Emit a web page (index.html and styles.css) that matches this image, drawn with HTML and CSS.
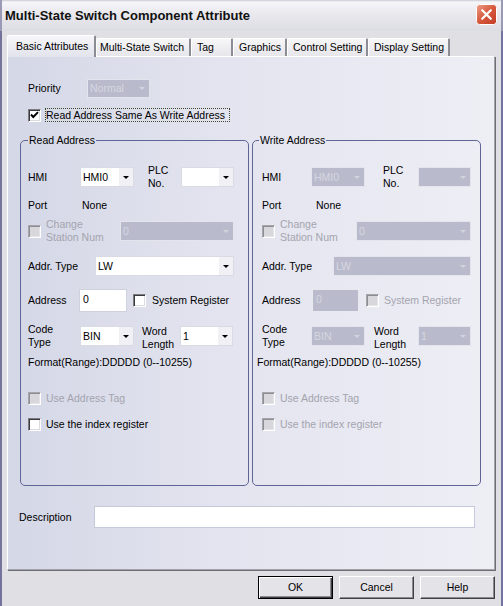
FILE: index.html
```html
<!DOCTYPE html>
<html>
<head>
<meta charset="utf-8">
<link rel="stylesheet" href="styles.css">
</head>
<body>
<div class="window">
  <div class="titlebar">
    <span class="title">Multi-State Switch Component Attribute</span>
    <span class="close">
      <svg width="21" height="21" viewBox="0 0 21 21">
        <defs>
          <linearGradient id="cg" x1="0" y1="0" x2="1" y2="1">
            <stop offset="0" stop-color="#ec9f88"/>
            <stop offset="0.5" stop-color="#d7583c"/>
            <stop offset="1" stop-color="#c03d26"/>
          </linearGradient>
        </defs>
        <rect x="0.5" y="0.5" width="20" height="20" rx="3" fill="url(#cg)" stroke="#ffffff"/>
        <path d="M6.2 6.2 L14.8 14.8 M14.8 6.2 L6.2 14.8" stroke="#ffffff" stroke-width="2.2" stroke-linecap="round"/>
      </svg>
    </span>
  </div>
  <div class="body">
    <div class="tabs">
      <div class="tab active t-basic">Basic Attributes</div>
      <div class="tab t-multi">Multi-State Switch</div>
      <div class="tab t-tag">Tag</div>
      <div class="tab t-gfx">Graphics</div>
      <div class="tab t-ctl">Control Setting</div>
      <div class="tab t-dsp">Display Setting</div>
    </div>
    <div class="panel">
      <div class="prio-row">
        <span class="prio-l">Priority</span>
        <div class="combo dis prio"><span class="v">Normal</span><span class="arr"></span></div>
      </div>
      <div class="same-row">
        <span class="chk on"><svg width="11" height="11" viewBox="0 0 11 11"><path d="M2 4.5 L4.3 7 L9 2.2" fill="none" stroke="#000" stroke-width="1.9"/></svg></span>
        <span class="focus">Read Address Same As Write Address</span>
      </div>
      <div class="groups">
        <fieldset class="group read">
          <legend>Read Address</legend>
          <div class="gbody">
            <div class="r r-hmi"><span class="l-c1">HMI</span><div class="combo c1"><span class="v">HMI0</span><span class="arr"></span></div><span class="l2 plc">PLC<br>No.</span><div class="combo c2"><span class="v"></span><span class="arr"></span></div></div>
            <div class="r r-port"><span class="l-port">Port</span><span>None</span></div>
            <div class="r r-chg"><span class="chk dis"></span><span class="l2 dtext chgl">Change<br>Station Num</span><div class="combo dis chgc"><span class="v">0</span><span class="arr"></span></div></div>
            <div class="r r-addr"><span class="l-addr">Addr. Type</span><div class="combo addrc"><span class="v">LW</span><span class="arr"></span></div></div>
            <div class="r r-adr"><span class="l-adr">Address</span><div class="inp adri">0</div><span class="chk sr"></span><span class="srl">System Register</span></div>
            <div class="r r-code"><span class="l2 l-code">Code<br>Type</span><div class="combo c1"><span class="v">BIN</span><span class="arr"></span></div><span class="l2 word">Word<br>Length</span><div class="combo c2"><span class="v">1</span><span class="arr"></span></div></div>
            <div class="r r-fmt"><span class="fmt">Format(Range):DDDDD (0--10255)</span></div>
            <div class="r r-tag"><span class="chk dis"></span><span class="cl dtext">Use Address Tag</span></div>
            <div class="r r-idx"><span class="chk"></span><span class="cl">Use the index register</span></div>
          </div>
        </fieldset>
        <fieldset class="group write">
          <legend>Write Address</legend>
          <div class="gbody">
            <div class="r r-hmi"><span class="l-c1">HMI</span><div class="combo dis c1"><span class="v">HMI0</span><span class="arr"></span></div><span class="l2 plc">PLC<br>No.</span><div class="combo dis c2"><span class="v"></span><span class="arr"></span></div></div>
            <div class="r r-port"><span class="l-port">Port</span><span>None</span></div>
            <div class="r r-chg"><span class="chk dis"></span><span class="l2 dtext chgl">Change<br>Station Num</span><div class="combo dis chgc"><span class="v">0</span><span class="arr"></span></div></div>
            <div class="r r-addr"><span class="l-addr">Addr. Type</span><div class="combo dis addrc"><span class="v">LW</span><span class="arr"></span></div></div>
            <div class="r r-adr"><span class="l-adr">Address</span><div class="inp dis adri">0</div><span class="chk dis sr"></span><span class="srl dtext">System Register</span></div>
            <div class="r r-code"><span class="l2 l-code">Code<br>Type</span><div class="combo dis c1"><span class="v">BIN</span><span class="arr"></span></div><span class="l2 word">Word<br>Length</span><div class="combo dis c2"><span class="v">1</span><span class="arr"></span></div></div>
            <div class="r r-fmt"><span class="fmt">Format(Range):DDDDD (0--10255)</span></div>
            <div class="r r-tag"><span class="chk dis"></span><span class="cl dtext">Use Address Tag</span></div>
            <div class="r r-idx"><span class="chk dis"></span><span class="cl dtext">Use the index register</span></div>
          </div>
        </fieldset>
      </div>
      <div class="desc-row">
        <span class="desc-l">Description</span>
        <div class="inp desc"></div>
      </div>
    </div>
    <div class="buttons">
      <div class="btn def">OK</div>
      <div class="btn">Cancel</div>
      <div class="btn">Help</div>
    </div>
  </div>
</div>
</body>
</html>
```
FILE: styles.css
```css
* { box-sizing: border-box; }
body {
  margin: 0;
  font-family: "Liberation Sans", Arial, sans-serif;
  font-size: 10.5px;
  line-height: 13px;
  color: #000;
  background: #e0dfe3;
}
.window {
  width: 503px;
  height: 606px;
  overflow: hidden;
  display: flex;
  flex-direction: column;
  background: #e0dfe3;
}
.titlebar {
  height: 31px;
  flex: none;
  display: flex;
  align-items: center;
  justify-content: space-between;
  padding: 0 4px 0 5px;
  background: linear-gradient(#c9c9d3 0, #f6f6f9 2px, #eaeaef 40%, #dcdce3 100%);
  border-left: 2px solid #9a9ab6;
  border-right: 2px solid #9a9ab6;
}
.titlebar .title {
  font-weight: bold;
  font-size: 13px;
  color: #111;
  margin-left: -2px;
}
.close { display: flex; width: 21px; height: 21px; margin-top: -2px; }
.body {
  flex: 1;
  border-left: 2px solid #73739c;
  border-right: 2px solid #73739c;
  padding: 4px 6px 0 5px;
  display: flex;
  flex-direction: column;
}
.tabs {
  display: flex;
  align-items: flex-end;
  height: 21px;
  flex: none;
}
.tab {
  height: 18px;
  padding: 2px 0 0 5px;
  background: linear-gradient(#f7f7f9, #e6e6eb);
  border-top: 1px solid #ffffff;
  border-left: 1px solid #ffffff;
  border-right: 2px solid #8c8c94;
  border-radius: 2px 2px 0 0;
  white-space: nowrap;
  overflow: hidden;
}
.tab.active {
  height: 22px;
  margin-bottom: -1px;
  padding: 4px 0 0 8px;
  position: relative;
  z-index: 1;
  background: linear-gradient(#f6f6f9, #e2e3ec);
}
.t-basic { width: 89px; }
.t-multi { width: 95px; padding-left: 3px; }
.t-tag { width: 42px; }
.t-gfx { width: 54px; }
.t-ctl { width: 81px; }
.t-dsp { width: 82px; }

.panel {
  width: 488px;
  height: 514px;
  flex: none;
  display: flex;
  flex-direction: column;
  border-top: 1px solid #ffffff;
  border-left: 1px solid #ffffff;
  border-right: 1px solid #a2a2a8;
  border-bottom: 1px solid #a2a2a8;
  box-shadow: 1px 1px 0 #6e6e74;
  background: linear-gradient(to right, #d4d7e6 0%, #e3e4ef 45%, #eeeef5 100%);
}
.prio-row {
  margin: 22px 0 0 20px;
  height: 19px;
  display: flex;
  align-items: center;
}
.prio-l { width: 59px; }
.combo.prio { width: 63px; height: 19px; }
.same-row {
  margin: 10px 0 0 20px;
  height: 14px;
  display: flex;
  align-items: center;
}
.focus {
  margin-left: 4px;
  border: 1px dotted #3c4a2a;
  height: 14px;
  line-height: 12px;
  padding: 0 0 0 0;
  width: 185px;
}
.groups {
  margin: 12px 0 0 12px;
  display: flex;
  gap: 3px;
  height: 352px;
  flex: none;
}
.group {
  margin: 0;
  width: 229px;
  height: 352px;
  min-width: 0;
  padding: 0 0 0 var(--pl);
  border: 1px solid #5f6596;
  border-radius: 5px;
}
.group legend {
  padding: 0 1px;
  height: 13px;
  line-height: 13px;
  margin-left: var(--lg);
}
.read {
  --pl: 7px; --lg: 0px;
  --c1: 52px; --c1w: 54px; --plcm: 14px; --plcw: 33px; --c2w: 53px;
  --chgw: 74px; --chgcw: 114px; --addrw: 67px; --addrcw: 139px;
  --adrw: 51px; --inpw: 48px; --srm: 6px; --srlm: 6px;
  --codew: 52px; --wordm: 8px; --wordw: 38px; --fmtm: 0px;
}
.write {
  --pl: 9px; --lg: -3px;
  --c1: 49px; --c1w: 54px; --plcm: 18px; --plcw: 35px; --c2w: 53px;
  --chgw: 76px; --chgcw: 115px; --addrw: 71px; --addrcw: 138px;
  --adrw: 50px; --inpw: 47px; --srm: 7px; --srlm: 5px;
  --codew: 49px; --wordm: 9px; --wordw: 44px; --fmtm: -5px;
}
.gbody { display: flex; flex-direction: column; }
.r { display: flex; align-items: center; white-space: nowrap; }
.r-hmi { margin-top: 16px; height: 28px; }
.r-port { margin-top: 7px; height: 14px; }
.r-chg { margin-top: 6px; height: 26px; }
.r-addr { margin-top: 12px; height: 20px; }
.r-adr { margin-top: 13px; height: 23px; }
.r-code { margin-top: 11px; height: 26px; }
.r-fmt { margin-top: 7px; height: 13px; }
.r-tag { margin-top: 22px; height: 14px; }
.r-idx { margin-top: 12px; height: 14px; }

.l-c1 { width: var(--c1); }
.c1 { width: var(--c1w); }
.plc { margin-left: var(--plcm); width: var(--plcw); }
.c2 { width: var(--c2w); }
.l-port { width: 54px; }
.chgl { margin-left: 5px; width: var(--chgw); }
.chgc { width: var(--chgcw); }
.l-addr { width: var(--addrw); }
.addrc { width: var(--addrcw); }
.l-adr { width: var(--adrw); }
.adri { width: var(--inpw); }
.sr { margin-left: var(--srm); }
.srl { margin-left: var(--srlm); }
.l-code { width: var(--codew); }
.word { margin-left: var(--wordm); width: var(--wordw); margin-top: 4px; }
.fmt { margin-left: var(--fmtm); }
.cl { margin-left: 5px; }
.l2 { line-height: 13px; }
.dtext { color: #a4a4ae; }

.combo {
  display: flex;
  align-items: center;
  height: 20px;
  flex: none;
  background: #ffffff;
  border: 1px solid #d8dae4;
  padding-left: 2px;
}
.combo .v { flex: 1; overflow: hidden; }
.combo .arr {
  width: 14px;
  align-self: stretch;
  display: flex;
  align-items: center;
  justify-content: center;
  background: #f1f1f5;
}
.combo .arr::after {
  content: "";
  border-left: 3px solid transparent;
  border-right: 3px solid transparent;
  border-top: 3px solid #000;
}
.combo.dis {
  background: #b9bbcc;
  border-color: #e4e5ec;
  color: #d6d7e0;
}
.combo.dis .arr { background: transparent; }
.combo.dis .arr::after { border-top-color: #d2d3dd; }

.inp {
  height: 23px;
  flex: none;
  display: flex;
  align-items: center;
  background: #ffffff;
  border: 1px solid #cfd2de;
  padding: 0 0 2px 3px;
}
.inp.dis {
  background: #b9bbcc;
  border: 1px solid #e8e9ef;
  color: #d6d7e0;
}
.desc-row {
  margin: 20px 0 0 11px;
  height: 22px;
  display: flex;
  align-items: center;
}
.desc-l { width: 75px; }
.inp.desc { width: 381px; height: 22px; border-color: #c6c9d9; }

.chk {
  width: 13px;
  height: 13px;
  flex: none;
  background: #ffffff;
  border: 1px solid;
  border-color: #7c7c80 #ffffff #ffffff #7c7c80;
  box-shadow: inset 1px 1px 0 #3a3a3e, inset -1px -1px 0 #dcdce0;
  display: flex;
  align-items: center;
  justify-content: center;
}
.chk.dis {
  background: #d8d8dc;
  border-color: #a6a6aa #ffffff #ffffff #a6a6aa;
  box-shadow: inset 1px 1px 0 #8c8c92, inset -1px -1px 0 #e4e4e8;
}
.chk svg { display: block; margin: 0 0 0 0; }

.buttons {
  display: flex;
  justify-content: flex-end;
  gap: 6px;
  margin-top: 6px;
  padding-right: 0;
}
.btn {
  width: 75px;
  height: 23px;
  display: flex;
  align-items: center;
  justify-content: center;
  background: #e4e3e8;
  border: 1px solid;
  border-color: #ffffff #404044 #404044 #ffffff;
  box-shadow: inset -1px -1px 0 #8a8a90;
  padding-bottom: 1px;
}
.btn.def {
  border: 1px solid #000;
  box-shadow: inset 1px 1px 0 #ffffff, inset -1px -1px 0 #404044, inset -2px -2px 0 #8a8a90;
}
```
